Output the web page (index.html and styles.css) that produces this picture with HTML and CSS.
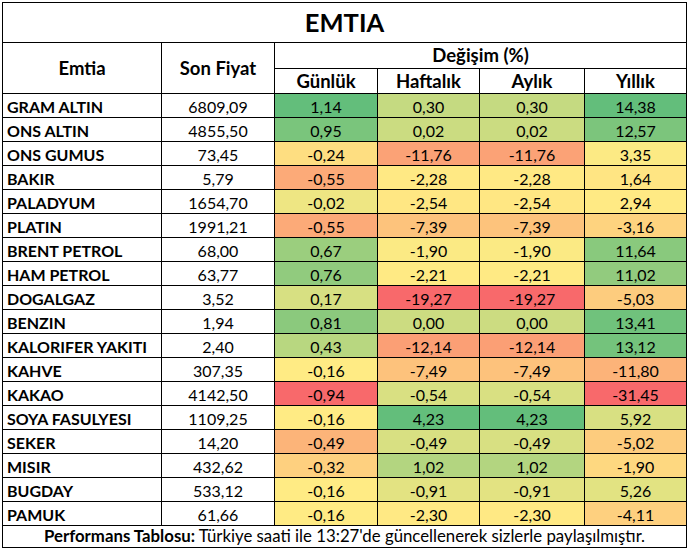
FILE: index.html
```html
<!DOCTYPE html>
<html lang="tr">
<head>
<meta charset="utf-8">
<title>EMTIA</title>
<link rel="stylesheet" href="styles.css">
</head>
<body>
<table class="sheet">
  <colgroup>
    <col class="c-name"><col class="c-price"><col class="c-d"><col class="c-w"><col class="c-m"><col class="c-y">
  </colgroup>
  <thead>
    <tr class="r-title"><th colspan="6" class="title">EMTIA</th></tr>
    <tr class="r-h1">
      <th rowspan="2" class="hd">Emtia</th>
      <th rowspan="2" class="hd">Son Fiyat</th>
      <th colspan="4" class="hd">Değişim (%)</th>
    </tr>
    <tr class="r-h2">
      <th class="hd">Günlük</th><th class="hd">Haftalık</th><th class="hd">Aylık</th><th class="hd">Yıllık</th>
    </tr>
  </thead>
  <tbody>
    <tr><td class="name">GRAM ALTIN</td><td class="num">6809,09</td><td class="pct">1,14</td><td class="pct">0,30</td><td class="pct">0,30</td><td class="pct">14,38</td></tr>
    <tr><td class="name">ONS ALTIN</td><td class="num">4855,50</td><td class="pct">0,95</td><td class="pct">0,02</td><td class="pct">0,02</td><td class="pct">12,57</td></tr>
    <tr><td class="name">ONS GUMUS</td><td class="num">73,45</td><td class="pct">-0,24</td><td class="pct">-11,76</td><td class="pct">-11,76</td><td class="pct">3,35</td></tr>
    <tr><td class="name">BAKIR</td><td class="num">5,79</td><td class="pct">-0,55</td><td class="pct">-2,28</td><td class="pct">-2,28</td><td class="pct">1,64</td></tr>
    <tr><td class="name">PALADYUM</td><td class="num">1654,70</td><td class="pct">-0,02</td><td class="pct">-2,54</td><td class="pct">-2,54</td><td class="pct">2,94</td></tr>
    <tr><td class="name">PLATIN</td><td class="num">1991,21</td><td class="pct">-0,55</td><td class="pct">-7,39</td><td class="pct">-7,39</td><td class="pct">-3,16</td></tr>
    <tr><td class="name">BRENT PETROL</td><td class="num">68,00</td><td class="pct">0,67</td><td class="pct">-1,90</td><td class="pct">-1,90</td><td class="pct">11,64</td></tr>
    <tr><td class="name">HAM PETROL</td><td class="num">63,77</td><td class="pct">0,76</td><td class="pct">-2,21</td><td class="pct">-2,21</td><td class="pct">11,02</td></tr>
    <tr><td class="name">DOGALGAZ</td><td class="num">3,52</td><td class="pct">0,17</td><td class="pct">-19,27</td><td class="pct">-19,27</td><td class="pct">-5,03</td></tr>
    <tr><td class="name">BENZIN</td><td class="num">1,94</td><td class="pct">0,81</td><td class="pct">0,00</td><td class="pct">0,00</td><td class="pct">13,41</td></tr>
    <tr><td class="name">KALORIFER YAKITI</td><td class="num">2,40</td><td class="pct">0,43</td><td class="pct">-12,14</td><td class="pct">-12,14</td><td class="pct">13,12</td></tr>
    <tr><td class="name">KAHVE</td><td class="num">307,35</td><td class="pct">-0,16</td><td class="pct">-7,49</td><td class="pct">-7,49</td><td class="pct">-11,80</td></tr>
    <tr><td class="name">KAKAO</td><td class="num">4142,50</td><td class="pct">-0,94</td><td class="pct">-0,54</td><td class="pct">-0,54</td><td class="pct">-31,45</td></tr>
    <tr><td class="name">SOYA FASULYESI</td><td class="num">1109,25</td><td class="pct">-0,16</td><td class="pct">4,23</td><td class="pct">4,23</td><td class="pct">5,92</td></tr>
    <tr><td class="name">SEKER</td><td class="num">14,20</td><td class="pct">-0,49</td><td class="pct">-0,49</td><td class="pct">-0,49</td><td class="pct">-5,02</td></tr>
    <tr><td class="name">MISIR</td><td class="num">432,62</td><td class="pct">-0,32</td><td class="pct">1,02</td><td class="pct">1,02</td><td class="pct">-1,90</td></tr>
    <tr><td class="name">BUGDAY</td><td class="num">533,12</td><td class="pct">-0,16</td><td class="pct">-0,91</td><td class="pct">-0,91</td><td class="pct">5,26</td></tr>
    <tr><td class="name">PAMUK</td><td class="num">61,66</td><td class="pct">-0,16</td><td class="pct">-2,30</td><td class="pct">-2,30</td><td class="pct">-4,11</td></tr>
  </tbody>
  <tfoot>
    <tr class="r-foot"><td colspan="6" class="foot"><b>Performans Tablosu:</b> Türkiye saati ile 13:27'de güncellenerek sizlerle paylaşılmıştır.</td></tr>
  </tfoot>
</table>
<script src="script.js"></script>
</body>
</html>
```

FILE: styles.css
```css
html, body {
  margin: 0;
  padding: 0;
  background: #ffffff;
}
body {
  font-family: "Lato", "Open Sans", sans-serif;
  color: #000000;
}
.sheet {
  border-collapse: collapse;
  table-layout: fixed;
  width: 684px;
  margin: 2px 0 0 2px;
}
.sheet th,
.sheet td {
  border: 1px solid #000000;
  padding: 0 4px;
  white-space: nowrap;
  overflow: hidden;
  line-height: 1;
}
.c-name { width: 159px; }
.c-price { width: 113px; }
.c-d { width: 103px; }
.c-w { width: 102px; }
.c-m { width: 105px; }
.c-y { width: 102px; }

.r-title { height: 40px; }
.r-h1 { height: 26px; }
.r-h2 { height: 25px; }
.sheet tbody tr { height: 24px; }
.r-foot { height: 22px; }

.title {
  font-size: 25.5px;
  font-weight: 700;
  text-align: center;
  padding-bottom: 2px;
}
.hd {
  font-size: 18.5px;
  font-weight: 700;
  text-align: center;
}
.sheet tbody td {
  padding-top: 2px;
}
.name {
  font-size: 16px;
  font-weight: 700;
  text-align: left;
}
.num,
.pct {
  font-size: 16px;
  text-align: center;
}
.foot {
  font-size: 16.8px;
  text-align: center;
}
.foot b { font-weight: 700; }
```

FILE: script.js
```js
(function () {
  var red = [248, 105, 107], yellow = [255, 235, 132], green = [99, 190, 123];
  function parse(t) { return parseFloat(t.replace(',', '.')); }
  function lerp(a, b, t) {
    return [0, 1, 2].map(function (i) { return Math.round(a[i] + (b[i] - a[i]) * t); });
  }
  var rows = document.querySelectorAll('.sheet tbody tr');
  for (var col = 2; col < 6; col++) {
    var cells = [], vals = [];
    rows.forEach(function (r) { var c = r.children[col]; cells.push(c); vals.push(parse(c.textContent)); });
    var s = vals.slice().sort(function (a, b) { return a - b; });
    var n = s.length, min = s[0], max = s[n - 1];
    var rank = 0.5 * (n - 1), lo = Math.floor(rank), f = rank - lo;
    var mid = s[lo] + (s[Math.min(lo + 1, n - 1)] - s[lo]) * f;
    cells.forEach(function (c, i) {
      var v = vals[i], rgb;
      if (v <= mid) rgb = lerp(red, yellow, mid === min ? 1 : (v - min) / (mid - min));
      else rgb = lerp(yellow, green, max === mid ? 0 : (v - mid) / (max - mid));
      c.style.backgroundColor = 'rgb(' + rgb.join(',') + ')';
    });
  }
})();
```
